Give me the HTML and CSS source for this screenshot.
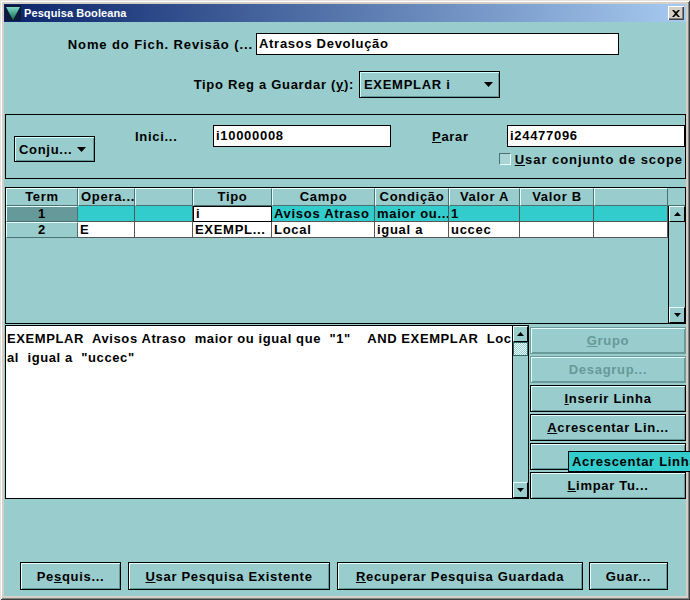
FILE: index.html
```html
<!DOCTYPE html>
<html>
<head>
<meta charset="utf-8">
<title>Pesquisa Booleana</title>
<link rel="stylesheet" href="styles.css">
</head>
<body>
<div class="window">
  <div class="titlebar">
    <svg class="appicon" width="16" height="16" viewBox="0 0 16 16">
      <defs>
        <linearGradient id="tri" x1="0" y1="0" x2="0" y2="1">
          <stop offset="0" stop-color="#7fd6c8"/>
          <stop offset="1" stop-color="#0b6e4a"/>
        </linearGradient>
      </defs>
      <rect x="0" y="0" width="16" height="16" fill="#0d1b3a"/>
      <polygon points="1,2 15,2 8,15" fill="url(#tri)"/>
    </svg>
    <span class="title">Pesquisa Booleana</span>
    <div class="closebtn">
      <svg width="8" height="7" viewBox="0 0 8 7"><path d="M0,0 L2,0 L4,2 L6,0 L8,0 L5,3.5 L8,7 L6,7 L4,5 L2,7 L0,7 L3,3.5 Z" fill="#000"/></svg>
    </div>
  </div>

  <div class="client">
    <div class="row row1">
      <span class="lbl lbl1">Nome do Fich. Revisão (...</span>
      <div class="input input1">Atrasos Devolução</div>
    </div>

    <div class="row row2">
      <span class="lbl lbl2">Tipo Reg a Guardar (<u>y</u>):</span>
      <div class="select select1">
        <span>EXEMPLAR i</span>
        <svg class="dd" width="9" height="5" viewBox="0 0 9 5"><polygon points="0,0 9,0 4.5,5" fill="#000"/></svg>
      </div>
    </div>

    <div class="panel">
      <div class="select select2">
        <span>Conju...</span>
        <svg class="dd" width="9" height="5" viewBox="0 0 9 5"><polygon points="0,0 9,0 4.5,5" fill="#000"/></svg>
      </div>
      <div class="panel-right">
        <div class="prow">
          <span class="plbl inici">Inici...</span>
          <div class="input input2">i10000008</div>
          <span class="plbl parar"><u>P</u>arar</span>
          <div class="input input3">i24477096</div>
        </div>
        <div class="prow2">
          <span class="checkbox"></span>
          <span class="cblabel"><u>U</u>sar conjunto de scope</span>
        </div>
      </div>
    </div>

    <div class="table">
      <div class="thead">
        <div class="th c1">Term</div>
        <div class="th c2 left">Opera...</div>
        <div class="th c3"></div>
        <div class="th c4">Tipo</div>
        <div class="th c5">Campo</div>
        <div class="th c6">Condição</div>
        <div class="th c7">Valor A</div>
        <div class="th c8">Valor B</div>
        <div class="th c9"></div>
        <div class="thcorner"></div>
      </div>
      <div class="tbody">
        <div class="rows">
          <div class="tr sel">
            <div class="td c1 rowhead selhead">1</div>
            <div class="td c2"></div>
            <div class="td c3"></div>
            <div class="td c4 editor">i</div>
            <div class="td c5">Avisos Atraso</div>
            <div class="td c6">maior ou...</div>
            <div class="td c7">1</div>
            <div class="td c8"></div>
            <div class="td c9"></div>
          </div>
          <div class="tr">
            <div class="td c1 rowhead">2</div>
            <div class="td c2">E</div>
            <div class="td c3"></div>
            <div class="td c4">EXEMPL...</div>
            <div class="td c5">Local</div>
            <div class="td c6">igual a</div>
            <div class="td c7">uccec</div>
            <div class="td c8"></div>
            <div class="td c9"></div>
          </div>
        </div>
        <div class="vscroll">
          <div class="arrowbtn"><svg width="7" height="4" viewBox="0 0 7 4"><polygon points="0,4 7,4 3.5,0" fill="#000"/></svg></div>
          <div class="track"></div>
          <div class="arrowbtn"><svg width="7" height="4" viewBox="0 0 7 4"><polygon points="0,0 7,0 3.5,4" fill="#000"/></svg></div>
        </div>
      </div>
    </div>

    <div class="lower">
      <div class="textbox">
        <div class="text">EXEMPLAR  Avisos Atraso  maior ou igual que  "1"    AND EXEMPLAR  Loc
al  igual a  "uccec"</div>
        <div class="vscroll vscroll2">
          <div class="arrowbtn"><svg width="7" height="4" viewBox="0 0 7 4"><polygon points="0,4 7,4 3.5,0" fill="#000"/></svg></div>
          <div class="thumb"></div>
          <div class="track"></div>
          <div class="arrowbtn"><svg width="7" height="4" viewBox="0 0 7 4"><polygon points="0,0 7,0 3.5,4" fill="#000"/></svg></div>
        </div>
      </div>
      <div class="btncol">
        <div class="btn disabled"><u>G</u>rupo</div>
        <div class="btn disabled">Desagrup...</div>
        <div class="btn"><u>I</u>nserir Linha</div>
        <div class="btn"><u>A</u>crescentar Lin...</div>
        <div class="btn tipholder"><div class="tooltip">Acrescentar Linha</div></div>
        <div class="btn"><u>L</u>impar Tu...</div>
      </div>
    </div>

    <div class="bottom">
      <div class="btn b1">Pe<u>s</u>quis...</div>
      <div class="btn b2"><u>U</u>sar Pesquisa Existente</div>
      <div class="btn b3"><u>R</u>ecuperar Pesquisa Guardada</div>
      <div class="btn b4">Guar...</div>
    </div>
  </div>
</div>
</body>
</html>
```

FILE: styles.css
```css
* { box-sizing: border-box; }
html, body { margin: 0; padding: 0; }
body {
  width: 690px;
  height: 600px;
  overflow: hidden;
  background: #d4d0c8;
  font-family: "Liberation Sans", Arial, sans-serif;
  font-weight: bold;
  font-size: 13px;
  letter-spacing: 0.7px;
  color: #000;
}
u { text-decoration: underline; text-underline-offset: 1px; }

.window {
  width: 690px;
  height: 600px;
  padding: 4px;
  background: #d4d0c8;
  box-shadow: inset 1px 1px 0 #e4e2dc, inset -1px -1px 0 #404040, inset 2px 2px 0 #ffffff, inset -2px -2px 0 #808080;
  display: flex;
  flex-direction: column;
}

.titlebar {
  height: 18px;
  flex: none;
  display: flex;
  align-items: center;
  padding-left: 1px;
  background: linear-gradient(to right, #0a246a, #a6caf0);
}
.appicon { display: block; }
.title {
  margin-left: 3px;
  color: #fff;
  font-size: 11px;
  font-weight: bold;
  font-family: "Liberation Sans", Arial, sans-serif;
  letter-spacing: 0.1px;
}
.closebtn {
  margin-left: auto;
  margin-right: 2px;
  width: 16px;
  height: 14px;
  background: #d4d0c8;
  box-shadow: inset 1px 1px 0 #fff, inset -1px -1px 0 #404040, inset -2px -2px 0 #808080;
  display: flex;
  align-items: center;
  justify-content: center;
}
.closebtn svg { display: block; }

.client {
  flex: 1;
  background: #99cccc;
  display: flex;
  flex-direction: column;
  position: relative;
}

.row { display: flex; align-items: center; flex: none; }
.row1 { margin-top: 11px; height: 22px; }
.row2 { margin-top: 16px; height: 27px; }
.lbl { text-align: right; white-space: nowrap; }
.lbl1 { width: 249px; margin-right: 3px; letter-spacing: 0.9px; }
.lbl2 { width: 350px; margin-right: 5px; }

.input {
  background: #fff;
  border: 1px solid #000;
  height: 22px;
  line-height: 20px;
  padding-left: 2px;
  white-space: nowrap;
  overflow: hidden;
}
.input1 { width: 363px; }

.select {
  height: 27px;
  border: 1px solid #000;
  box-shadow: inset 1px 1px 0 #ccffff, inset -1px -1px 0 #669999;
  display: flex;
  align-items: center;
  padding-left: 4px;
  padding-right: 6px;
}
.select span { flex: 1; white-space: nowrap; }
.select .dd { display: block; }
.select1 { width: 141px; }

.panel {
  margin-top: 16px;
  margin-left: 1px;
  width: 681px;
  height: 65px;
  flex: none;
  border: 1px solid #000;
  display: flex;
  padding: 10px 0 0 8px;
}
.select2 { width: 81px; height: 26px; margin-top: 11px; padding-right: 8px; }
.panel-right { flex: 1; display: flex; flex-direction: column; }
.prow { display: flex; align-items: center; height: 22px; }
.plbl { white-space: nowrap; }
.inici { margin-left: 40px; width: 78px; }
.input2 { width: 178px; }
.parar { margin-left: 41px; width: 75px; }
.input3 { flex: 1; }
.prow2 {
  display: flex;
  align-items: center;
  justify-content: flex-end;
  margin-top: 4px;
  height: 16px;
  padding-right: 2px;
}
.checkbox {
  width: 12px;
  height: 12px;
  border: 1px solid;
  border-color: #4d6e6e #e8ffff #e8ffff #4d6e6e;
  background: #a9d4d4;
  margin-right: 4px;
}
.cblabel { letter-spacing: 0.95px; }

/* table */
.table {
  margin-top: 8px;
  margin-left: 1px;
  width: 681px;
  height: 137px;
  flex: none;
  border: 1px solid #000;
  display: flex;
  flex-direction: column;
}
.thead { display: flex; height: 18px; flex: none; }
.th {
  height: 18px;
  line-height: 16px;
  text-align: center;
  border-top: 1px solid #e6ffff;
  border-left: 1px solid #e6ffff;
  border-right: 1px solid #4a7070;
  border-bottom: 1px solid #4a7070;
  white-space: nowrap;
  overflow: hidden;
}
.th.left { text-align: left; padding-left: 2px; }
.thcorner { flex: 1; border-bottom: 1px solid #4a7070; }
.c1 { width: 72px; }
.c2 { width: 57px; }
.c3 { width: 58px; }
.c4 { width: 79px; }
.c5 { width: 103px; }
.c6 { width: 74px; }
.c7 { width: 71px; }
.c8 { width: 74px; }
.c9 { width: 74px; }

.tbody { flex: 1; display: flex; min-height: 0; }
.rows { width: 662px; display: flex; flex-direction: column; }
.tr { display: flex; height: 16px; }
.td {
  height: 16px;
  line-height: 15px;
  background: #fff;
  border-right: 1px solid #555;
  border-bottom: 1px solid #555;
  padding-left: 2px;
  white-space: nowrap;
  overflow: hidden;
}
.tr.sel .td { background: #33cccc; }
.td.rowhead {
  text-align: center;
  padding-left: 0;
  background: #99cccc;
  border-top: 1px solid #e6ffff;
  border-left: 1px solid #e6ffff;
  border-right: 1px solid #4a7070;
  border-bottom: 1px solid #4a7070;
  line-height: 14px;
}
.tr.sel .td.selhead { background: #669999; }
.tr.sel .td.editor {
  background: #fff;
  border: 1px solid #000;
  line-height: 14px;
}

.vscroll {
  width: 17px;
  display: flex;
  flex-direction: column;
  border-left: 1px solid #000;
  background: #99cccc;
}
.arrowbtn {
  height: 16px;
  flex: none;
  display: flex;
  align-items: center;
  justify-content: center;
  background: #99cccc;
  border-top: 1px solid #e6ffff;
  border-left: 1px solid #e6ffff;
  border-right: 1px solid #000;
  border-bottom: 1px solid #000;
}
.arrowbtn svg { display: block; }
.track { flex: 1; }

.lower {
  margin-top: 1px;
  margin-left: 1px;
  height: 174px;
  flex: none;
  display: flex;
}
.textbox {
  width: 524px;
  height: 174px;
  border: 1px solid #000;
  display: flex;
}
.text {
  width: 506px;
  background: #fff;
  white-space: pre;
  overflow: hidden;
  padding: 3px 0 0 1px;
  line-height: 19px;
  letter-spacing: 0.6px;
}
.vscroll2 { width: 16px; }
.thumb {
  height: 14px;
  flex: none;
  border: 1px solid #336666;
  background-color: #99cccc;
  background-image: repeating-conic-gradient(#e6ffff 0 25%, #99cccc 0 50%);
  background-size: 2px 2px;
}

.btncol {
  margin-left: 1px;
  padding-top: 2px;
  width: 156px;
  display: flex;
  flex-direction: column;
  gap: 2px;
}
.btn {
  height: 27px;
  border: 1px solid #000;
  box-shadow: inset 1px 1px 0 #e6ffff, inset -1px -1px 0 #669999;
  display: flex;
  align-items: center;
  justify-content: center;
  white-space: nowrap;
  background: #99cccc;
}
.btn.disabled {
  color: #669999;
  border-color: #6f9a9a;
}
.tipholder { position: relative; }
.tooltip {
  position: absolute;
  left: 37px;
  top: 7px;
  height: 21px;
  padding: 0 0 0 3px;
  width: 122px;
  line-height: 19px;
  background: #33cccc;
  border: 1px solid #000;
  border-right: none;
  text-align: left;
  white-space: nowrap;
  overflow: hidden;
  z-index: 10;
}

.bottom {
  margin-top: 63px;
  margin-left: 16px;
  display: flex;
  flex: none;
  height: 28px;
}
.bottom .btn { height: 28px; }
.b1 { width: 101px; }
.b2 { width: 202px; margin-left: 7px; }
.b3 { width: 246px; margin-left: 7px; }
.b4 { width: 79px; margin-left: 6px; }
```
